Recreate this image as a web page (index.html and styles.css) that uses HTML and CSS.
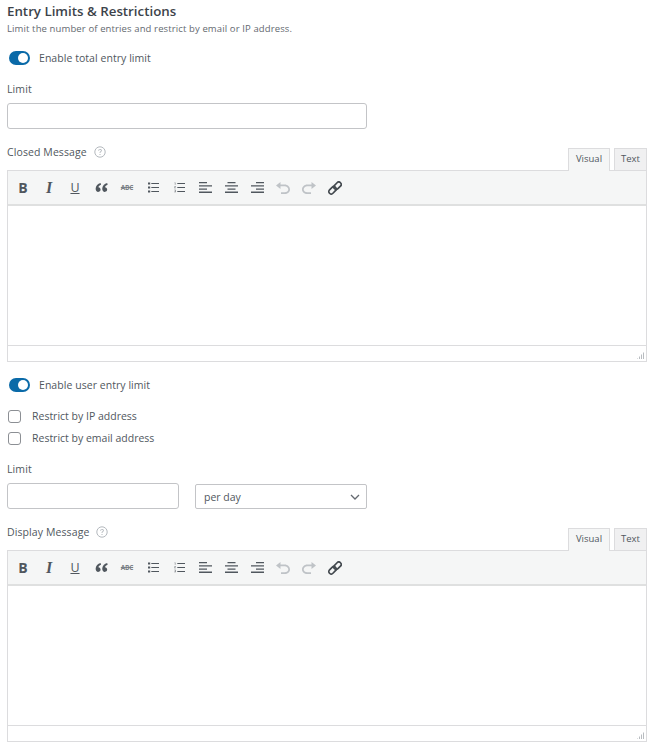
FILE: index.html
```html
<!DOCTYPE html>
<html lang="en">
<head>
<meta charset="utf-8">
<title>Entry Limits &amp; Restrictions</title>
<link rel="stylesheet" href="styles.css">
</head>
<body>
<svg class="sprite" width="0" height="0" aria-hidden="true">
  <symbol id="i-quote" viewBox="0 0 14 12"><path d="M6 1C3 2 .6 4 .6 7.400c0 2 1.200 3.400 2.800 3.400 1.500 0 2.600-1.100 2.600-2.500S5 5.800 3.600 5.800C3.800 4.500 5 3.500 6.500 2.900zM13.200 1c-3 1-5.400 3-5.400 6.400 0 2 1.200 3.400 2.800 3.400 1.500 0 2.600-1.100 2.600-2.500s-1-2.500-2.400-2.500c.2-1.300 1.400-2.300 2.900-2.900z"/></symbol>
  <symbol id="i-ul" viewBox="0 0 12 11"><path d="M0 0h2.400v2.200H0zM0 4.400h2.400v2.200H0zM0 8.800h2.400V11H0zM3.600.5H12v1.100H3.600zM3.600 4.900H12V6H3.600zM3.600 9.300H12v1.100H3.600z"/></symbol>
  <symbol id="i-ol" viewBox="0 0 12 11"><path d="M3.600.5H12v1.100H3.600zM3.600 4.900H12V6H3.600zM3.600 9.300H12v1.100H3.600z"/><path d="M.6 0h1v2.400h-.7V.7H.6zM.2 4h1.800v.7L1 5.700h1v.6H.2v-.6l1-1H.2zM.2 8h1.800v2.800H.2v-.6h1.100v-.5H.6v-.5h.7v-.6H.2z" opacity=".75"/></symbol>
  <symbol id="i-left" viewBox="0 0 13 11"><path d="M0 0h8v1.300H0zM0 3.200h13v1.300H0zM0 6.400h8v1.300H0zM0 9.600h13v1.300H0z"/></symbol>
  <symbol id="i-center" viewBox="0 0 13 11"><path d="M2.500 0h8v1.300h-8zM0 3.200h13v1.300H0zM2.500 6.400h8v1.300h-8zM0 9.600h13v1.300H0z"/></symbol>
  <symbol id="i-right" viewBox="0 0 13 11"><path d="M5 0h8v1.300H5zM0 3.200h13v1.300H0zM5 6.400h8v1.300H5zM0 9.600h13v1.300H0z"/></symbol>
  <symbol id="i-undo" viewBox="0 0 14 12"><path d="M4.500 0v2.600h4.200C11.600 2.600 14 4.800 14 7.500S11.600 12 8.700 12H5v-1.700h3.700c2 0 3.600-1.200 3.600-2.800S10.700 4.300 8.700 4.300H4.500V7L0 3.500z"/></symbol>
  <symbol id="i-redo" viewBox="0 0 14 12"><path d="M9.500 0v2.600H5.300C2.400 2.600 0 4.800 0 7.500S2.400 12 5.300 12H9v-1.700H5.300c-2 0-3.600-1.200-3.600-2.800s1.600-3.200 3.600-3.200h4.200V7L14 3.500z"/></symbol>
  <symbol id="i-link" viewBox="0 0 14 14"><g fill="none" stroke="currentColor" stroke-width="1.700"><rect x="7.100" y="0.500" width="4.800" height="8.400" rx="2.400" transform="rotate(45 9.500 4.700)"/><rect x="2.100" y="5.100" width="4.800" height="8.400" rx="2.400" transform="rotate(45 4.500 9.300)"/></g></symbol>
  <symbol id="i-help" viewBox="0 0 12 12"><circle cx="6" cy="6" r="5.200" fill="none" stroke="currentColor" stroke-width="1"/><path d="M4.200 4.700c0-1.100.8-1.800 1.900-1.800s1.800.7 1.800 1.600c0 1.400-1.500 1.300-1.500 2.600h-.9c0-1.800 1.500-1.700 1.500-2.600 0-.4-.4-.8-.9-.8s-1 .4-1 1zM5.500 7.900h1v1.100h-1z"/></symbol>
</svg>

<main class="page">
  <h1 class="title">Entry Limits &amp; Restrictions</h1>
  <p class="subtitle">Limit the number of entries and restrict by email or IP address.</p>

  <div class="toggle-row first-toggle">
    <span class="toggle"></span>
    <span class="toggle-label">Enable total entry limit</span>
  </div>

  <label class="field-label limit-label">Limit</label>
  <div class="text-input wide"></div>

  <div class="editor-field closed-field">
    <div class="editor-head">
      <span class="field-label">Closed Message</span>
      <svg class="help"><use href="#i-help"/></svg>
      <div class="tabs">
        <span class="tab active">Visual</span>
        <span class="tab">Text</span>
      </div>
    </div>
    <div class="editor">
      <div class="toolbar">
        <span class="tool glyph bold">B</span>
        <span class="tool glyph italic">I</span>
        <span class="tool glyph under">U</span>
        <span class="tool"><svg class="ic-quote"><use href="#i-quote"/></svg></span>
        <span class="tool glyph abc">ABC</span>
        <span class="tool"><svg class="ic-list"><use href="#i-ul"/></svg></span>
        <span class="tool"><svg class="ic-list"><use href="#i-ol"/></svg></span>
        <span class="tool"><svg class="ic-align"><use href="#i-left"/></svg></span>
        <span class="tool"><svg class="ic-align"><use href="#i-center"/></svg></span>
        <span class="tool"><svg class="ic-align"><use href="#i-right"/></svg></span>
        <span class="tool muted"><svg class="ic-hist"><use href="#i-undo"/></svg></span>
        <span class="tool muted"><svg class="ic-hist"><use href="#i-redo"/></svg></span>
        <span class="tool"><svg class="ic-link"><use href="#i-link"/></svg></span>
      </div>
      <div class="editor-body"></div>
      <div class="statusbar"><span class="grip"></span></div>
    </div>
  </div>

  <div class="toggle-row second-toggle">
    <span class="toggle"></span>
    <span class="toggle-label">Enable user entry limit</span>
  </div>

  <div class="check-row check-one">
    <span class="checkbox"></span>
    <span class="check-label">Restrict by IP address</span>
  </div>
  <div class="check-row check-two">
    <span class="checkbox"></span>
    <span class="check-label">Restrict by email address</span>
  </div>

  <label class="field-label limit-label-two">Limit</label>
  <div class="limit-row">
    <div class="text-input narrow"></div>
    <div class="select">
      <span>per day</span>
      <svg class="chevron" viewBox="0 0 10 6"><path d="M1 1l4 4 4-4" fill="none" stroke="currentColor" stroke-width="1.300"/></svg>
    </div>
  </div>

  <div class="editor-field display-field">
    <div class="editor-head">
      <span class="field-label">Display Message</span>
      <svg class="help"><use href="#i-help"/></svg>
      <div class="tabs">
        <span class="tab active">Visual</span>
        <span class="tab">Text</span>
      </div>
    </div>
    <div class="editor">
      <div class="toolbar">
        <span class="tool glyph bold">B</span>
        <span class="tool glyph italic">I</span>
        <span class="tool glyph under">U</span>
        <span class="tool"><svg class="ic-quote"><use href="#i-quote"/></svg></span>
        <span class="tool glyph abc">ABC</span>
        <span class="tool"><svg class="ic-list"><use href="#i-ul"/></svg></span>
        <span class="tool"><svg class="ic-list"><use href="#i-ol"/></svg></span>
        <span class="tool"><svg class="ic-align"><use href="#i-left"/></svg></span>
        <span class="tool"><svg class="ic-align"><use href="#i-center"/></svg></span>
        <span class="tool"><svg class="ic-align"><use href="#i-right"/></svg></span>
        <span class="tool muted"><svg class="ic-hist"><use href="#i-undo"/></svg></span>
        <span class="tool muted"><svg class="ic-hist"><use href="#i-redo"/></svg></span>
        <span class="tool"><svg class="ic-link"><use href="#i-link"/></svg></span>
      </div>
      <div class="editor-body"></div>
      <div class="statusbar"><span class="grip"></span></div>
    </div>
  </div>
</main>
</body>
</html>
```
FILE: styles.css
```css
* { box-sizing: border-box; }
html, body { margin: 0; padding: 0; background: #fff; }
body {
  font-family: "Open Sans", "Noto Sans", sans-serif;
  font-size: 10.5px;
  line-height: 14px;
  color: #50575e;
  overflow: hidden;
  height: 753px;
}
.sprite { position: absolute; }
.page { padding: 3px 16px 0 7px; }

.title { margin: 0; font-size: 13.3px; line-height: 16px; font-weight: 600; color: #3c434a; }
.subtitle { margin: 3px 0 0; font-size: 9.5px; line-height: 14px; color: #646970; letter-spacing: .12px; }

.toggle-row { display: flex; align-items: center; height: 14px; }
.first-toggle { margin-top: 15px; }
.second-toggle { margin-top: 16px; }
.toggle {
  position: relative;
  width: 21px; height: 14px; margin-left: 2px;
  border-radius: 7px;
  background: #0a6aa8;
}
.toggle::after {
  content: ""; position: absolute; right: 2px; top: 2px;
  width: 10px; height: 10px; border-radius: 50%; background: #fff;
}
.toggle-label { margin-left: 9px; letter-spacing: .05px; }

.field-label { display: block; letter-spacing: .1px; }
.limit-label { margin-top: 17px; }
.limit-label-two { margin-top: 17px; }

.text-input { height: 26px; background: #fff; border: 1px solid #c3c4c7; border-radius: 3px; }
.wide { width: 360px; margin-top: 7px; }
.narrow { width: 172px; height: 26px; }

.editor-field { width: 640px; }
.closed-field { margin-top: 16px; }
.display-field { margin-top: 16px; }
.editor-head { display: flex; align-items: flex-start; height: 25px; }
.help { width: 12px; height: 12px; margin: 1px 0 0 7px; color: #b4b9be; fill: currentColor; }
.tabs { display: flex; align-items: flex-start; margin-left: auto; position: relative; z-index: 1; margin-top: 3px; gap: 4px; }
.tab {
  display: block;
  border: 1px solid #dcdcde; border-bottom: 0;
  font-size: 9.5px; line-height: 20px; color: #50575e;
  text-align: center;
}
.tab.active { height: 23px; width: 42px; background: #f5f6f6; }
.tab:not(.active) { width: 33px; height: 22px; background: #f0f0f1; }

.editor { border: 1px solid #dcdcde; height: 192px; display: flex; flex-direction: column; background: #fff; }
.toolbar {
  display: flex; align-items: center;
  height: 35px; padding: 0 0 0 2px;
  background: #f5f6f6;
  border-bottom: 2px solid #dfe0e0;
  flex: none;
}
.tool {
  width: 26px; height: 26px; flex: none;
  display: flex; align-items: center; justify-content: center;
  color: #50575e; fill: currentColor;
}
.tool.muted { color: #bfc3c7; }
.glyph { font-weight: 700; font-size: 14px; line-height: 26px; color: #50575e; }
.italic { font-style: italic; font-family: "Liberation Serif", serif; font-size: 16px; }
.under { font-weight: 400; text-decoration: underline; font-size: 12.5px; }
.abc { font-size: 6.5px; letter-spacing: -.2px; color: #7b8187; text-decoration: line-through; }
.ic-quote { width: 13px; height: 11px; }
.ic-list { width: 11px; height: 11px; }
.ic-align { width: 13px; height: 11px; }
.ic-hist { width: 14px; height: 12px; }
.ic-link { width: 14px; height: 14px; color: #43494f; }

.editor-body { flex: 1; background: #fff; }
.statusbar { height: 16px; flex: none; border-top: 1px solid #dcdcde; position: relative; }
.grip {
  position: absolute; right: 2px; bottom: 2px;
  width: 7px; height: 7px;
  background: repeating-linear-gradient(90deg, #b8bcc0 0 1px, #fff 1px 2px);
  clip-path: polygon(100% 0, 100% 100%, 0 100%);
}

.check-row { display: flex; align-items: center; height: 14px; }
.check-one { margin-top: 17px; }
.check-two { margin-top: 8px; }
.checkbox { width: 13px; height: 13px; margin-left: 1px; border: 1px solid #8c8f94; border-radius: 3px; background: #fff; }
.check-label { margin-left: 11px; }

.limit-row { display: flex; gap: 16px; margin-top: 7px; width: 360px; }
.select {
  width: 172px; height: 25px; margin-top: 1px;
  padding: 0 6px 0 8px;
  display: flex; align-items: center; justify-content: space-between;
  border: 1px solid #c3c4c7; border-radius: 2px;
  color: #50575e;
}
.chevron { width: 10px; height: 6px; color: #646970; }
```
